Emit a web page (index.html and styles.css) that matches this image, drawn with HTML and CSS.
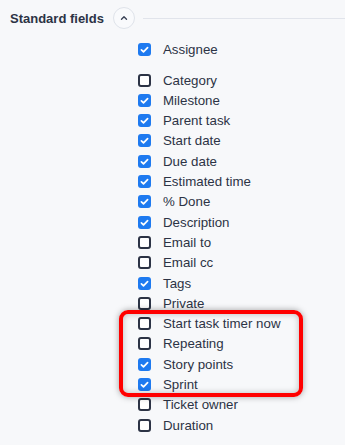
FILE: index.html
```html
<!DOCTYPE html>
<html lang="en">
<head>
    <meta charset="UTF-8">
    <title>Standard fields</title>
    <link rel="stylesheet" href="styles.css">
</head>
<body>
    <div class="section">
        <div class="section-head">
            <h2>Standard fields</h2>
            <button class="toggle" type="button">
                <svg width="10" height="10" viewBox="0 0 10 10"><path d="M2.5 6.2 L5 3.7 L7.5 6.2" fill="none" stroke="#3a4256" stroke-width="1.4" stroke-linecap="round" stroke-linejoin="round"/></svg>
            </button>
            <span class="rule"></span>
        </div>

        <div class="fields">
            <div class="field first"><span class="box on"></span>Assignee</div>
            <div class="field"><span class="box"></span>Category</div>
            <div class="field"><span class="box on"></span>Milestone</div>
            <div class="field"><span class="box on"></span>Parent task</div>
            <div class="field"><span class="box on"></span>Start date</div>
            <div class="field"><span class="box on"></span>Due date</div>
            <div class="field"><span class="box on"></span>Estimated time</div>
            <div class="field"><span class="box on"></span>% Done</div>
            <div class="field"><span class="box on"></span>Description</div>
            <div class="field"><span class="box"></span>Email to</div>
            <div class="field"><span class="box"></span>Email cc</div>
            <div class="field"><span class="box on"></span>Tags</div>
            <div class="field"><span class="box"></span>Private</div>
            <div class="highlight">
                <div class="field"><span class="box"></span>Start task timer now</div>
                <div class="field"><span class="box"></span>Repeating</div>
                <div class="field"><span class="box on"></span>Story points</div>
                <div class="field"><span class="box on"></span>Sprint</div>
            </div>
            <div class="field"><span class="box"></span>Ticket owner</div>
            <div class="field"><span class="box"></span>Duration</div>
        </div>
    </div>
</body>
</html>
```

FILE: styles.css
```css
/* Base */
body {
    margin: 0;
    background-color: #f7f8fa;
    font-family: 'Liberation Sans', Arial, sans-serif;
    color: #2c3345;
}

.section {
    padding: 7px 0 0 10px;
}

/* Header */
.section-head {
    display: flex;
    align-items: center;
    height: 22px;
}

h2 {
    margin: 0;
    font-size: 13px;
    font-weight: bold;
    color: #2c3345;
}

.toggle {
    width: 22px;
    height: 22px;
    margin-left: 9px;
    padding: 0;
    border: 1px solid #dfe3ea;
    border-radius: 50%;
    background-color: #f9fafc;
    display: flex;
    align-items: center;
    justify-content: center;
    box-sizing: border-box;
}

.rule {
    flex: 1;
    height: 1px;
    margin-left: 8px;
    background-color: #e1e4eb;
}

/* Field list */
.fields {
    margin-left: 128px;
    margin-top: 10px;
}

.field {
    display: flex;
    align-items: center;
    height: 20.3px;
    font-size: 13.3px;
}

.field.first {
    margin-bottom: 10.6px;
}

.box {
    width: 13px;
    height: 13px;
    margin-right: 12px;
    border: 2px solid #2c3345;
    border-radius: 3px;
    background-color: #fff;
    box-sizing: border-box;
    flex-shrink: 0;
}

.box.on {
    border: none;
    background-color: #1e7af0;
    background-image: url("data:image/svg+xml,%3Csvg xmlns='http://www.w3.org/2000/svg' viewBox='0 0 13 13'%3E%3Cpath d='M3.4 6.8 L5.5 8.8 L9.6 4.6' fill='none' stroke='white' stroke-width='1.7' stroke-linecap='round' stroke-linejoin='round'/%3E%3C/svg%3E");
}

/* Red annotation frame */
.highlight {
    position: relative;
}

.highlight::after {
    content: '';
    position: absolute;
    top: -3px;
    bottom: -2px;
    left: -19px;
    width: 184px;
    box-sizing: border-box;
    border: 4px solid #ff0000;
    border-radius: 9px;
    box-shadow: 0 0 6px rgba(0, 0, 0, 0.35), inset 0 0 6px rgba(0, 0, 0, 0.25);
}
```
